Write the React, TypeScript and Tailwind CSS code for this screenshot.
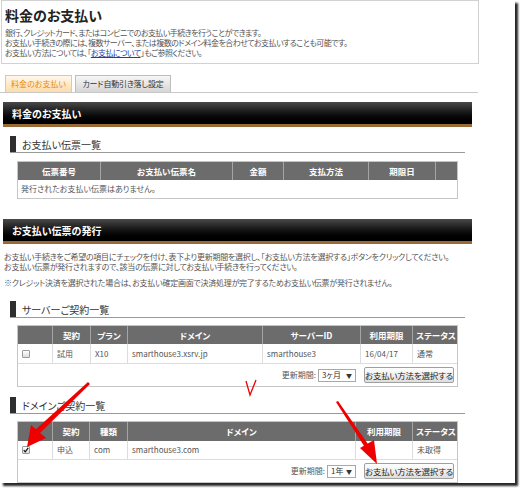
const jp = "font-['Noto_Sans_CJK_JP','Noto_Sans',sans-serif] [font-feature-settings:'palt']"

function SectionBar({ title }: { title: string }) {
  return (
    <div className="ml-[3px] flex h-[25px] w-[469px] items-center border-b-[3px] border-[#9a6a36] bg-gradient-to-b from-[#4a4a4a] via-[#151515] to-black pl-[9px] text-[10px] font-bold text-white">
      {title}
    </div>
  )
}

function SubHead({ title }: { title: string }) {
  return (
    <div className="ml-[10px] flex h-[17px] w-[455px] items-stretch border-b border-[#9a9a9a]">
      <span className="w-[6px] bg-[#2e2e2e]" />
      <span className="flex items-center pl-[6px] text-[10px] text-[#333]">{title}</span>
    </div>
  )
}

function Check({ checked }: { checked?: boolean }) {
  return (
    <span className="flex h-[8px] w-[8px] items-center justify-center rounded-[1px] border border-[#9a9a9a] bg-gradient-to-b from-white to-[#dcdcdc]">
      {checked && (
        <svg width="8" height="8" viewBox="0 0 8 8">
          <path d="M1 4.2 L3 6.4 L7 1.2" fill="none" stroke="#111" strokeWidth="1.6" />
        </svg>
      )}
    </span>
  )
}

function PayFooter({ period, selW }: { period: string; selW: string }) {
  return (
    <div className="flex h-[22px] items-center justify-end whitespace-nowrap pr-[3px] text-[8px] text-[#555]">
      <span>更新期間:</span>
      <span
        className={`ml-[2px] flex h-[13px] ${selW} items-center justify-between border border-[#a8a8a8] bg-white px-[3px] text-[8px] text-[#333]`}
      >
        <span>{period}</span>
        <span className="text-[6px]">▼</span>
      </span>
      <span className="ml-[8px] flex h-[16px] w-[90px] items-center justify-center rounded-[2px] border border-[#a0a0a0] bg-gradient-to-b from-white to-[#dedede] text-[8.5px] tracking-[-0.2px] text-[#222]">
        お支払い方法を選択する
      </span>
    </div>
  )
}

const th = 'flex items-center justify-center whitespace-nowrap border-r border-[#a5a5a5] text-[8.5px] font-bold text-white last:border-r-0'
const td = 'flex items-center whitespace-nowrap border-r border-[#dcdcdc] pl-[4px] text-[8px] text-[#555] last:border-r-0'

export default function App() {
  return (
    <div className={`relative h-[492px] w-[520px] overflow-hidden bg-white ${jp}`}>
      <div className="relative h-[483px] w-[515px] overflow-hidden bg-white shadow-[3px_3px_2px_rgba(0,0,0,0.85)]">
        <div className="ml-[1px] h-[64px] w-[478px] border border-[#d2d2d2] px-[3px]">
          <div className="h-[27px] pt-[3px] text-[14px] font-bold leading-[22px] text-[#222]">料金のお支払い</div>
          <div className="whitespace-nowrap text-[8px] leading-[10px] tracking-[-0.55px] text-[#555]">
            <p>銀行、クレジットカード、またはコンビニでのお支払い手続きを行うことができます。</p>
            <p>お支払い手続きの際には、複数サーバー、または複数のドメイン料金を合わせてお支払いすることも可能です。</p>
            <p>
              お支払い方法については、「<span className="text-[#1a3fa8] underline">お支払について</span>」もご参照ください。
            </p>
          </div>
        </div>

        <div className="mt-[11px] flex h-[18px] w-[478px] items-end gap-[3px] border-b border-[#c8c8c8] pl-[5px]">
          <span className="flex h-[17px] w-[67px] items-center justify-center whitespace-nowrap border border-b-0 border-[#efc58a] bg-gradient-to-b from-[#fff8ec] to-[#fcdcaa] text-[8px] text-[#e5891c]">
            料金のお支払い
          </span>
          <span className="flex h-[17px] w-[96px] items-center justify-center whitespace-nowrap border border-b-0 border-[#bdbdbd] bg-gradient-to-b from-[#f6f6f6] to-[#d6d6d6] text-[8px] tracking-[-0.2px] text-[#333]">
            カード自動引き落し設定
          </span>
        </div>

        <div className="mt-[9px]">
          <SectionBar title="料金のお支払い" />
        </div>
        <div className="mt-[9px]">
          <SubHead title="お支払い伝票一覧" />
        </div>

        <div className="ml-[17px] mt-[8px] w-[441px] border border-[#c6c6c6]">
          <div className="grid h-[18px] grid-cols-[83px_132px_51px_85px_67px_23px] bg-[#6c6c6c]">
            <span className={th}>伝票番号</span>
            <span className={th}>お支払い伝票名</span>
            <span className={th}>金額</span>
            <span className={th}>支払方法</span>
            <span className={th}>期限日</span>
            <span className={th} />
          </div>
          <div className="flex h-[18px] items-center pl-[3px] text-[8px] text-[#555]">発行されたお支払い伝票はありません。</div>
        </div>

        <div className="mt-[20px]">
          <SectionBar title="お支払い伝票の発行" />
        </div>

        <div className="mt-[8px] whitespace-nowrap pl-[4px] text-[8px] leading-[10px] tracking-[-0.25px] text-[#555]">
          <p>お支払い手続きをご希望の項目にチェックを付け、表下より更新期間を選択し、「お支払い方法を選択する」ボタンをクリックしてください。</p>
          <p>お支払い伝票が発行されますので、該当の伝票に対してお支払い手続きを行ってください。</p>
          <p className="mt-[6px]">※クレジット決済を選択された場合は、お支払い確定画面で決済処理が完了するためお支払い伝票が発行されません。</p>
        </div>

        <div className="mt-[13px]">
          <SubHead title="サーバーご契約一覧" />
        </div>

        <div className="ml-[17px] mt-[7px] w-[441px] border border-[#c6c6c6]">
          <div className="grid h-[18px] grid-cols-[35px_38px_37px_135px_98px_52px_46px] bg-[#6c6c6c]">
            <span className={th} />
            <span className={th}>契約</span>
            <span className={th}>プラン</span>
            <span className={th}>ドメイン</span>
            <span className={th}>サーバーID</span>
            <span className={th}>利用期限</span>
            <span className={th}>ステータス</span>
          </div>
          <div className="grid h-[20px] grid-cols-[35px_38px_37px_135px_98px_52px_46px] border-b border-[#dcdcdc]">
            <span className={td}>
              <Check />
            </span>
            <span className={td}>試用</span>
            <span className={td}>X10</span>
            <span className={td}>smarthouse3.xsrv.jp</span>
            <span className={td}>smarthouse3</span>
            <span className={td}>16/04/17</span>
            <span className={td}>通常</span>
          </div>
          <PayFooter period="3ヶ月" selW="w-[38px]" />
        </div>

        <div className="mt-[10px]">
          <SubHead title="ドメインご契約一覧" />
        </div>

        <div className="ml-[17px] mt-[7px] w-[441px] border border-[#c6c6c6]">
          <div className="grid h-[19px] grid-cols-[35px_37px_38px_228px_57px_46px] bg-[#6c6c6c]">
            <span className={th} />
            <span className={th}>契約</span>
            <span className={th}>種類</span>
            <span className={th}>ドメイン</span>
            <span className={th}>利用期限</span>
            <span className={th}>ステータス</span>
          </div>
          <div className="grid h-[19px] grid-cols-[35px_37px_38px_228px_57px_46px] border-b border-[#dcdcdc]">
            <span className={td}>
              <Check checked />
            </span>
            <span className={td}>申込</span>
            <span className={td}>com</span>
            <span className={td}>smarthouse3.com</span>
            <span className={td} />
            <span className={td}>未取得</span>
          </div>
          <PayFooter period="1年" selW="w-[29px]" />
        </div>

        {/* annotation arrows */}
        <svg className="pointer-events-none absolute inset-0" width="515" height="483" viewBox="0 0 515 483">
          <polygon points="88,382 90,384 39,434 34,431" fill="#ee0000" />
          <polygon points="27,447 31,425 46,438" fill="#ee0000" />
          <polygon points="336,402 338,401 370,447 366,449" fill="#ee0000" />
          <polygon points="377,464 360,448 374,440" fill="#ee0000" />
          <path d="M246 381 L250 395 L256 380" fill="none" stroke="#ee0000" strokeWidth="1.3" />
        </svg>
      </div>
    </div>
  )
}
